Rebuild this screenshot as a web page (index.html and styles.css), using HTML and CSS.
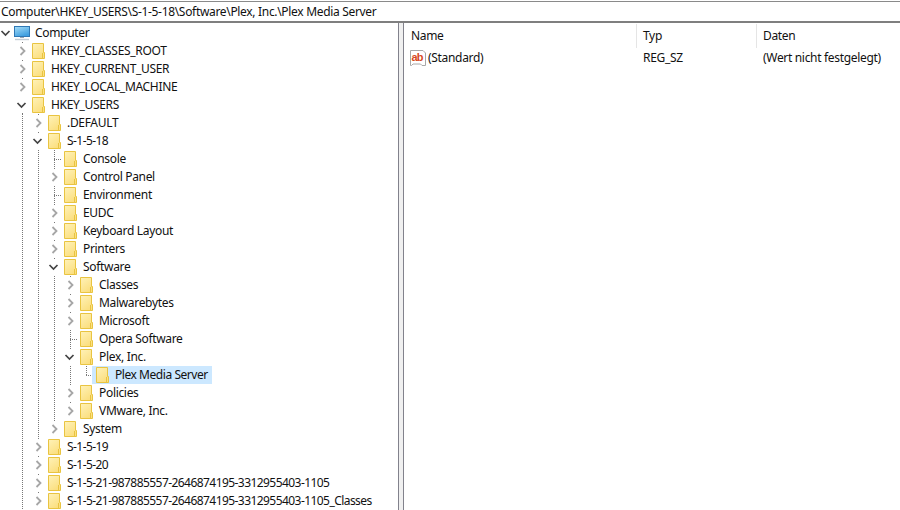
FILE: index.html
```html
<!DOCTYPE html>
<html lang="de">
<head>
<meta charset="utf-8">
<title>Registrierungs-Editor</title>
<link rel="stylesheet" href="styles.css">
</head>
<body>
<svg class="defs" width="0" height="0" aria-hidden="true">
  <defs>
    <linearGradient id="fg" x1="0" y1="0" x2="0.6" y2="1">
      <stop offset="0" stop-color="#fff2b8"/>
      <stop offset="1" stop-color="#fbdf80"/>
    </linearGradient>
    <linearGradient id="sc" x1="0" y1="0" x2="0.5" y2="1">
      <stop offset="0" stop-color="#a8def8"/>
      <stop offset="1" stop-color="#3f9fe0"/>
    </linearGradient>
    <symbol id="folder" viewBox="0 0 16 18">
      <path d="M2.5 1.5H13.5V10.5H14.5V16.5H2.5Z" fill="url(#fg)" stroke="#e9c441"/>
      <path d="M12.5 11V16" stroke="#e9c441" fill="none"/>
    </symbol>
    <symbol id="open" viewBox="0 0 16 18">
      <rect x="2" y="1" width="12" height="16" fill="#fff"/>
      <path d="M3.5 7L7.5 11L11.5 7" fill="none" stroke="#444" stroke-width="1.7"/>
    </symbol>
    <symbol id="closed" viewBox="0 0 16 18">
      <rect x="2" y="1" width="12" height="16" fill="#fff"/>
      <path d="M6.5 5L10.5 9L6.5 13" fill="none" stroke="#a6a6a6" stroke-width="1.8"/>
    </symbol>
    <symbol id="pc" viewBox="0 0 16 18">
      <rect x="0.5" y="2.5" width="15" height="10" fill="url(#sc)" stroke="#2f78b5"/>
      <path d="M6 13.5H10" stroke="#9aa7b3"/>
      <path d="M1 15.5H15" stroke="#c3ccd4" stroke-width="1.4"/>
    </symbol>
  </defs>
</svg>

<div class="address">Computer\HKEY_USERS\S-1-5-18\Software\Plex, Inc.\Plex Media Server</div>

<main class="panes">
  <nav class="tree">
    <div class="row"><span class="cell"><svg class="ic"><use href="#open"/></svg></span><svg class="ic"><use href="#pc"/></svg><span class="label">Computer</span></div>

    <div class="row"><span class="cell"></span><span class="cell line"><svg class="ic"><use href="#closed"/></svg></span><svg class="ic"><use href="#folder"/></svg><span class="label">HKEY_CLASSES_ROOT</span></div>
    <div class="row"><span class="cell"></span><span class="cell line"><svg class="ic"><use href="#closed"/></svg></span><svg class="ic"><use href="#folder"/></svg><span class="label">HKEY_CURRENT_USER</span></div>
    <div class="row"><span class="cell"></span><span class="cell line"><svg class="ic"><use href="#closed"/></svg></span><svg class="ic"><use href="#folder"/></svg><span class="label">HKEY_LOCAL_MACHINE</span></div>
    <div class="row"><span class="cell"></span><span class="cell line-start"><svg class="ic"><use href="#open"/></svg></span><svg class="ic"><use href="#folder"/></svg><span class="label">HKEY_USERS</span></div>

    <div class="row"><span class="cell"></span><span class="cell line"></span><span class="cell line"><svg class="ic"><use href="#closed"/></svg></span><svg class="ic"><use href="#folder"/></svg><span class="label">.DEFAULT</span></div>
    <div class="row"><span class="cell"></span><span class="cell line"></span><span class="cell line"><svg class="ic"><use href="#open"/></svg></span><svg class="ic"><use href="#folder"/></svg><span class="label sid">S-1-5-18</span></div>

    <div class="row"><span class="cell"></span><span class="cell line"></span><span class="cell line"></span><span class="cell line branch"></span><svg class="ic"><use href="#folder"/></svg><span class="label">Console</span></div>
    <div class="row"><span class="cell"></span><span class="cell line"></span><span class="cell line"></span><span class="cell line"><svg class="ic"><use href="#closed"/></svg></span><svg class="ic"><use href="#folder"/></svg><span class="label">Control Panel</span></div>
    <div class="row"><span class="cell"></span><span class="cell line"></span><span class="cell line"></span><span class="cell line branch"></span><svg class="ic"><use href="#folder"/></svg><span class="label">Environment</span></div>
    <div class="row"><span class="cell"></span><span class="cell line"></span><span class="cell line"></span><span class="cell line"><svg class="ic"><use href="#closed"/></svg></span><svg class="ic"><use href="#folder"/></svg><span class="label">EUDC</span></div>
    <div class="row"><span class="cell"></span><span class="cell line"></span><span class="cell line"></span><span class="cell line"><svg class="ic"><use href="#closed"/></svg></span><svg class="ic"><use href="#folder"/></svg><span class="label">Keyboard Layout</span></div>
    <div class="row"><span class="cell"></span><span class="cell line"></span><span class="cell line"></span><span class="cell line"><svg class="ic"><use href="#closed"/></svg></span><svg class="ic"><use href="#folder"/></svg><span class="label">Printers</span></div>
    <div class="row"><span class="cell"></span><span class="cell line"></span><span class="cell line"></span><span class="cell line"><svg class="ic"><use href="#open"/></svg></span><svg class="ic"><use href="#folder"/></svg><span class="label">Software</span></div>

    <div class="row"><span class="cell"></span><span class="cell line"></span><span class="cell line"></span><span class="cell line"></span><span class="cell line"><svg class="ic"><use href="#closed"/></svg></span><svg class="ic"><use href="#folder"/></svg><span class="label">Classes</span></div>
    <div class="row"><span class="cell"></span><span class="cell line"></span><span class="cell line"></span><span class="cell line"></span><span class="cell line"><svg class="ic"><use href="#closed"/></svg></span><svg class="ic"><use href="#folder"/></svg><span class="label">Malwarebytes</span></div>
    <div class="row"><span class="cell"></span><span class="cell line"></span><span class="cell line"></span><span class="cell line"></span><span class="cell line"><svg class="ic"><use href="#closed"/></svg></span><svg class="ic"><use href="#folder"/></svg><span class="label">Microsoft</span></div>
    <div class="row"><span class="cell"></span><span class="cell line"></span><span class="cell line"></span><span class="cell line"></span><span class="cell line branch"></span><svg class="ic"><use href="#folder"/></svg><span class="label">Opera Software</span></div>
    <div class="row"><span class="cell"></span><span class="cell line"></span><span class="cell line"></span><span class="cell line"></span><span class="cell line"><svg class="ic"><use href="#open"/></svg></span><svg class="ic"><use href="#folder"/></svg><span class="label">Plex, Inc.</span></div>
    <div class="row"><span class="cell"></span><span class="cell line"></span><span class="cell line"></span><span class="cell line"></span><span class="cell line"></span><span class="cell corner"></span><span class="selected"><svg class="ic"><use href="#folder"/></svg><span class="label">Plex Media Server</span></span></div>
    <div class="row"><span class="cell"></span><span class="cell line"></span><span class="cell line"></span><span class="cell line"></span><span class="cell line"><svg class="ic"><use href="#closed"/></svg></span><svg class="ic"><use href="#folder"/></svg><span class="label">Policies</span></div>
    <div class="row"><span class="cell"></span><span class="cell line"></span><span class="cell line"></span><span class="cell line"></span><span class="cell line-end"><svg class="ic"><use href="#closed"/></svg></span><svg class="ic"><use href="#folder"/></svg><span class="label">VMware, Inc.</span></div>
    <div class="row"><span class="cell"></span><span class="cell line"></span><span class="cell line"></span><span class="cell line-end"><svg class="ic"><use href="#closed"/></svg></span><svg class="ic"><use href="#folder"/></svg><span class="label">System</span></div>

    <div class="row"><span class="cell"></span><span class="cell line"></span><span class="cell line"><svg class="ic"><use href="#closed"/></svg></span><svg class="ic"><use href="#folder"/></svg><span class="label sid">S-1-5-19</span></div>
    <div class="row"><span class="cell"></span><span class="cell line"></span><span class="cell line"><svg class="ic"><use href="#closed"/></svg></span><svg class="ic"><use href="#folder"/></svg><span class="label sid">S-1-5-20</span></div>
    <div class="row"><span class="cell"></span><span class="cell line"></span><span class="cell line"><svg class="ic"><use href="#closed"/></svg></span><svg class="ic"><use href="#folder"/></svg><span class="label sid">S-1-5-21-987885557-2646874195-3312955403-1105</span></div>
    <div class="row"><span class="cell"></span><span class="cell line"></span><span class="cell line"><svg class="ic"><use href="#closed"/></svg></span><svg class="ic"><use href="#folder"/></svg><span class="label sid">S-1-5-21-987885557-2646874195-3312955403-1105_Classes</span></div>
  </nav>

  <div class="splitter"></div>

  <section class="list">
    <div class="head">
      <span class="col col-name">Name</span>
      <span class="col col-type">Typ</span>
      <span class="col col-data">Daten</span>
    </div>
    <div class="entry">
      <span class="col col-name">
        <svg class="ab" viewBox="0 0 16 16">
          <path d="M0.5 0.5H13L15.5 3V15.5H12L10.5 14H3L1.5 15.5H0.5Z" fill="#fff" stroke="#a8a8a8"/>
          <text x="1.5" y="10.5" textLength="12" class="ab-text">ab</text>
        </svg>
        <span>(Standard)</span>
      </span>
      <span class="col col-type">REG_SZ</span>
      <span class="col col-data">(Wert nicht festgelegt)</span>
    </div>
  </section>
</main>
</body>
</html>
```
FILE: styles.css
```css
* { box-sizing: border-box; }

html, body {
  margin: 0;
  height: 510px;
  overflow: hidden;
  background: #fff;
}

body {
  font-family: "Noto Sans", "Open Sans", sans-serif;
  font-size: 12px;
  letter-spacing: -0.32px;
  color: #111;
}

.defs { display: block; height: 0; }

.address {
  height: 22px;
  margin-top: 1px;
  padding-left: 1px;
  line-height: 19px;
  white-space: nowrap;
  border-top: 1px solid #8a8a8a;
  border-bottom: 2px solid #7f7f7f;
}

.panes {
  display: flex;
  height: 487px;
}

.tree {
  width: 400px;
  margin-left: -2px;
  padding-top: 1px;
  flex: none;
  overflow: hidden;
}

.row {
  display: flex;
  align-items: center;
  height: 18px;
  white-space: nowrap;
}

.cell {
  width: 16px;
  height: 18px;
  flex: none;
  display: block;
}

.ic {
  display: block;
  width: 16px;
  height: 18px;
  flex: none;
}

.label { margin-left: 5px; padding-bottom: 2px; }
.sid { letter-spacing: -0.56px; }

.line, .line-start, .line-end, .branch, .corner {
  background-repeat: no-repeat;
  background-image: repeating-linear-gradient(to bottom, #777 0 1px, transparent 1px 2px);
  background-size: 1px 18px;
  background-position: 8px 0;
}

.line-start { background-size: 1px 9px; background-position: 8px 9px; }
.line-end { background-size: 1px 9px; background-position: 8px 0; }

.branch {
  background-image:
    repeating-linear-gradient(to bottom, #777 0 1px, transparent 1px 2px),
    repeating-linear-gradient(to right, #777 0 1px, transparent 1px 2px);
  background-size: 1px 18px, 8px 1px;
  background-position: 8px 0, 8px 9px;
}

.corner {
  width: 14px;
  background-image:
    repeating-linear-gradient(to bottom, #777 0 1px, transparent 1px 2px),
    repeating-linear-gradient(to right, #777 0 1px, transparent 1px 2px);
  background-size: 1px 10px, 6px 1px;
  background-position: 8px 0, 8px 9px;
}

.selected {
  display: flex;
  align-items: center;
  height: 18px;
  width: 120px;
  padding-left: 2px;
  background: #cce8ff;
}

.selected .label { letter-spacing: -0.45px; }

.splitter {
  width: 6px;
  flex: none;
  background: #f0f0f0;
  border-left: 1px solid #82828c;
  border-right: 1px solid #82828c;
}

.list {
  flex: 1;
  min-width: 0;
  padding-top: 1px;
}

.head, .entry {
  display: flex;
  align-items: center;
  white-space: nowrap;
}

.head { height: 24px; }
.entry { height: 20px; }

.col { display: flex; align-items: center; padding: 0 0 2px 6px; height: 100%; }
.col-name { width: 233px; padding-left: 7px; }
.col-type { width: 120px; }
.col-data { flex: 1; }

.head .col-name, .head .col-type { border-right: 1px solid #e5e5e5; }

.ab {
  width: 16px;
  height: 16px;
  margin: 2px 2px 0 -1px;
  flex: none;
}

.ab-text {
  font-family: "Liberation Sans", sans-serif;
  font-size: 11px;
  font-weight: 700;
  letter-spacing: 0;
  fill: #d8481e;
}
```
